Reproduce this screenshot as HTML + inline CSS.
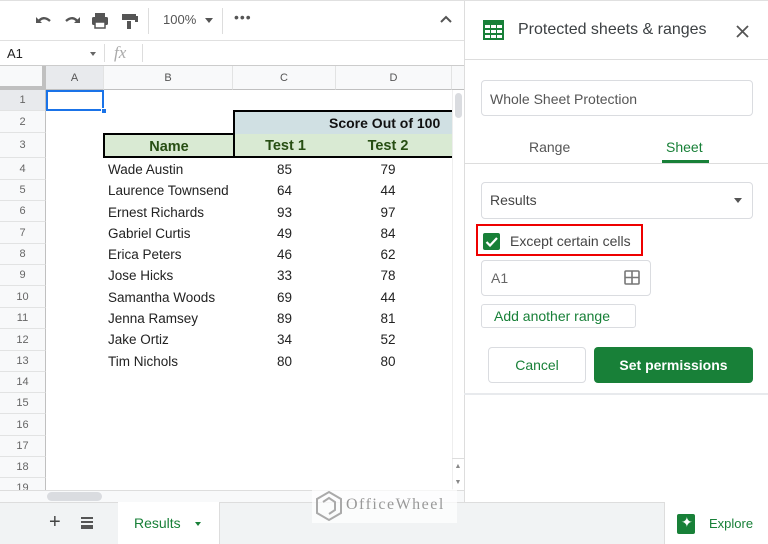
<!DOCTYPE html>
<html><head><style>
*{box-sizing:border-box;margin:0;padding:0}
body{width:768px;height:544px;overflow:hidden;background:#fff;font-family:"Liberation Sans",Arial,sans-serif;position:relative;font-size:13px;color:#222}
.a{position:absolute}
.rh{position:absolute;left:0;width:46px;background:#f8f9fa;border-bottom:1px solid #e2e3e3;border-right:1px solid #c0c0c0;color:#666;font-size:11px;text-align:center}
.ch{position:absolute;top:66px;height:24px;background:#f8f9fa;border-right:1px solid #e2e3e3;border-bottom:1px solid #c0c0c0;color:#555;font-size:11px;text-align:center;line-height:24px}
.num{text-align:center}
.pt{color:#3c4043}
</style></head><body>
<div class="a" style="left:0;top:0;width:464px;height:41px;border-bottom:1px solid #e0e0e0;border-top:1px solid #e0e0e0"></div>
<svg class="a" style="left:34px;top:12px" width="120" height="18" viewBox="0 0 120 18">
<path d="M4 10 Q9 3 16 9" stroke="#555" stroke-width="2.4" fill="none"/><path d="M2 5v6h6" fill="#555"/>
<path d="M44 10 Q39 3 32 9" stroke="#555" stroke-width="2.4" fill="none"/><path d="M46 5v6h-6" fill="#555"/>
<rect x="58" y="5" width="16" height="8" rx="1.5" fill="#555"/><rect x="61" y="1" width="10" height="4" fill="#555"/><rect x="61" y="10" width="10" height="6" fill="#fff" stroke="#555" stroke-width="1.5"/>
<rect x="88" y="2" width="14" height="6" fill="#555"/><rect x="101" y="4" width="3" height="6" fill="#555"/><rect x="93" y="9" width="4" height="8" fill="#555"/>
</svg>
<div class="a" style="left:148px;top:8px;width:1px;height:26px;background:#ddd"></div>
<div class="a" style="left:163px;top:12px;font-size:13px;color:#555">100%</div>
<div class="a" style="left:205px;top:18px;border:4px solid transparent;border-top:5px solid #555"></div>
<div class="a" style="left:222px;top:8px;width:1px;height:26px;background:#ddd"></div>
<div class="a" style="left:234px;top:9px;font-size:14px;color:#555;letter-spacing:1px">•••</div>
<svg class="a" style="left:440px;top:15px" width="12" height="8"><path d="M1 7l5-5 5 5" stroke="#555" stroke-width="2" fill="none"/></svg>
<div class="a" style="left:0;top:41px;width:464px;height:25px;border-bottom:1px solid #ccc"></div>
<div class="a" style="left:7px;top:46px;font-size:13px">A1</div>
<div class="a" style="left:90px;top:52px;border:3px solid transparent;border-top:4px solid #666"></div>
<div class="a" style="left:104px;top:44px;width:1px;height:18px;background:#ddd"></div>
<div class="a" style="left:114px;top:43px;font-family:'Liberation Serif',serif;font-style:italic;font-size:17px;color:#aaa">fx</div>
<div class="a" style="left:142px;top:44px;width:1px;height:18px;background:#ddd"></div>
<div class="a" style="left:0;top:66px;width:46px;height:24px;background:#f8f9fa;border-right:4px solid #c0c0c0;border-bottom:4px solid #c0c0c0"></div>
<div class="ch" style="left:46px;width:58px;background:#e8eaed">A</div>
<div class="ch" style="left:104px;width:129px">B</div>
<div class="ch" style="left:233px;width:103px">C</div>
<div class="ch" style="left:336px;width:116px">D</div>
<div class="ch" style="left:452px;width:12px;border-right:none"></div>
<div class="rh" style="top:90px;height:21px;line-height:21px;background:#e8eaed">1</div>
<div class="rh" style="top:111px;height:22px;line-height:22px">2</div>
<div class="rh" style="top:133px;height:25px;line-height:25px">3</div>
<div class="rh" style="top:158px;height:22px;line-height:22px">4</div>
<div class="rh" style="top:180px;height:21px;line-height:21px">5</div>
<div class="rh" style="top:201px;height:21px;line-height:21px">6</div>
<div class="rh" style="top:222px;height:22px;line-height:22px">7</div>
<div class="rh" style="top:244px;height:21px;line-height:21px">8</div>
<div class="rh" style="top:265px;height:21px;line-height:21px">9</div>
<div class="rh" style="top:286px;height:22px;line-height:22px">10</div>
<div class="rh" style="top:308px;height:21px;line-height:21px">11</div>
<div class="rh" style="top:329px;height:22px;line-height:22px">12</div>
<div class="rh" style="top:351px;height:21px;line-height:21px">13</div>
<div class="rh" style="top:372px;height:21px;line-height:21px">14</div>
<div class="rh" style="top:393px;height:21px;line-height:21px">15</div>
<div class="rh" style="top:414px;height:22px;line-height:22px">16</div>
<div class="rh" style="top:436px;height:21px;line-height:21px">17</div>
<div class="rh" style="top:457px;height:21px;line-height:21px">18</div>
<div class="rh" style="top:478px;height:13px;line-height:21px;overflow:hidden;border-bottom:none">19</div>
<div class="a" style="left:46px;top:90px;width:58px;height:21px;border:2px solid #1a73e8"></div>
<div class="a" style="left:101px;top:108px;width:6px;height:6px;background:#1a73e8;border:1px solid #fff"></div>
<div class="a" style="left:233px;top:110px;width:221px;height:48px;border:2px solid #000;border-right:none;background:#d9ead3"></div>
<div class="a" style="left:235px;top:112px;width:219px;height:22px;background:#d0e0e3"></div>
<div class="a" style="left:329px;top:115px;font-weight:bold;font-size:14px;color:#111">Score Out of 100</div>
<div class="a" style="left:103px;top:133px;width:132px;height:25px;border:2px solid #000;background:#d9ead3;text-align:center;line-height:24px;font-weight:bold;font-size:14.5px;color:#274e13">Name</div>
<div class="a" style="left:235px;top:138px;width:101px;text-align:center;font-weight:bold;font-size:14.5px;color:#274e13">Test 1</div>
<div class="a" style="left:336px;top:138px;width:104px;text-align:center;font-weight:bold;font-size:14.5px;color:#274e13">Test 2</div>
<div class="a" style="left:108px;top:159px;line-height:21.3px;font-size:13.5px">Wade Austin<br>Laurence Townsend<br>Ernest Richards<br>Gabriel Curtis<br>Erica Peters<br>Jose Hicks<br>Samantha Woods<br>Jenna Ramsey<br>Jake Ortiz<br>Tim Nichols</div>
<div class="a num" style="left:233px;width:103px;top:159px;line-height:21.3px;font-size:13.5px">85<br>64<br>93<br>49<br>46<br>33<br>69<br>89<br>34<br>80</div>
<div class="a num" style="left:336px;width:104px;top:159px;line-height:21.3px;font-size:13.5px">79<br>44<br>97<br>84<br>62<br>78<br>44<br>81<br>52<br>80</div>
<div class="a" style="left:452px;top:90px;width:12px;height:400px;background:#fff;border-left:1px solid #eee"></div>
<div class="a" style="left:455px;top:93px;width:7px;height:25px;border-radius:4px;background:#dadce0"></div>
<div class="a" style="left:452px;top:458px;width:12px;height:32px;border-top:1px solid #ddd;font-size:7px;color:#888;text-align:center;line-height:16px">▲<br>▼</div>
<div class="a" style="left:0;top:490px;width:464px;height:12px;background:#f8f9fa;border-top:1px solid #ddd"></div>
<div class="a" style="left:47px;top:492px;width:55px;height:9px;border-radius:5px;background:#dadce0"></div>
<div class="a" style="left:0;top:502px;width:768px;height:42px;background:#f1f3f4;border-top:1px solid #ddd"></div>
<div class="a" style="left:49px;top:511px;font-size:20px;color:#444">+</div>
<div class="a" style="left:81px;top:517px;width:12px;height:12px;border-top:2px solid #555;border-bottom:2px solid #555"><div style="margin-top:2px;height:2px;background:#555"></div><div style="margin-top:2px;height:2px;background:#555"></div></div>
<div class="a" style="left:118px;top:502px;width:102px;height:42px;background:#fff;border-right:1px solid #ddd"></div>
<div class="a" style="left:134px;top:515px;font-size:14px;color:#188038">Results</div>
<div class="a" style="left:195px;top:522px;border:3.5px solid transparent;border-top:4px solid #188038"></div>
<div class="a" style="left:312px;top:489px;width:145px;height:34px;background:rgba(255,255,255,.7)"></div>
<svg class="a" style="left:314px;top:490px" width="30" height="32"><path d="M15 2l12 7v14l-12 7-12-7V9z" fill="none" stroke="#aaa" stroke-width="2"/><path d="M9 12l6-4 6 4v8l-6 4" fill="none" stroke="#aaa" stroke-width="2"/></svg>
<div class="a" style="left:346px;top:496px;font-family:'Liberation Serif',serif;font-size:16px;color:#999;letter-spacing:1.5px">OfficeWheel</div>
<div class="a" style="left:664px;top:502px;width:104px;height:42px;background:#fff;border-left:1px solid #ddd"></div>
<div class="a" style="left:677px;top:514px;width:18px;height:20px;background:#188038;border-radius:2px"></div>
<div class="a" style="left:681px;top:514px;color:#fff;font-size:14px">✦</div>
<div class="a" style="left:709px;top:516px;font-size:13px;color:#188038">Explore</div>
<div class="a" style="left:464px;top:0;width:304px;height:502px;background:#fff;border-left:1px solid #ddd"></div>
<div class="a" style="left:464px;top:0;width:304px;height:1px;background:#e0e0e0"></div>
<svg class="a" style="left:483px;top:20px" width="21" height="20"><rect x="0" y="0" width="21" height="20" fill="#188038"/><g fill="#fff"><rect x="2" y="5" width="5" height="3"/><rect x="8" y="5" width="5" height="3"/><rect x="14" y="5" width="5" height="3"/><rect x="2" y="10" width="5" height="3"/><rect x="8" y="10" width="5" height="3"/><rect x="14" y="10" width="5" height="3"/><rect x="2" y="15" width="5" height="3"/><rect x="8" y="15" width="5" height="3"/><rect x="14" y="15" width="5" height="3"/></g></svg>
<div class="a pt" style="left:518px;top:21px;font-size:16px">Protected sheets &amp; ranges</div>
<svg class="a" style="left:736px;top:25px" width="13" height="13"><path d="M1 1l11 11M12 1L1 12" stroke="#555" stroke-width="1.8"/></svg>
<div class="a" style="left:464px;top:59px;width:304px;height:1px;background:#ddd"></div>
<div class="a" style="left:481px;top:80px;width:272px;height:36px;border:1px solid #dadce0;border-radius:4px"></div>
<div class="a" style="left:490px;top:91px;font-size:14px;color:#555">Whole Sheet Protection</div>
<div class="a" style="left:529px;top:139px;font-size:14px;color:#555">Range</div>
<div class="a" style="left:666px;top:139px;font-size:14px;color:#188038">Sheet</div>
<div class="a" style="left:662px;top:160px;width:47px;height:3px;background:#188038"></div>
<div class="a" style="left:464px;top:163px;width:304px;height:1px;background:#ddd"></div>
<div class="a" style="left:481px;top:182px;width:272px;height:37px;border:1px solid #dadce0;border-radius:4px"></div>
<div class="a" style="left:490px;top:192px;font-size:14px;color:#444">Results</div>
<div class="a" style="left:734px;top:198px;border:4px solid transparent;border-top:5px solid #555"></div>
<div class="a" style="left:476px;top:224px;width:167px;height:32px;border:2px solid #e00"></div>
<div class="a" style="left:483px;top:233px;width:17px;height:17px;background:#188038;border-radius:2px"></div>
<svg class="a" style="left:483px;top:233px" width="17" height="17"><path d="M3.5 9l3.5 3.5 7-7.5" stroke="#fff" stroke-width="2.2" fill="none"/></svg>
<div class="a" style="left:510px;top:233px;font-size:14px;color:#444">Except certain cells</div>
<div class="a" style="left:481px;top:260px;width:170px;height:36px;border:1px solid #dadce0;border-radius:4px"></div>
<div class="a" style="left:491px;top:270px;font-size:14px;color:#666">A1</div>
<svg class="a" style="left:624px;top:270px" width="16" height="15"><rect x="1" y="1" width="14" height="13" rx="1" fill="none" stroke="#777" stroke-width="1.6"/><path d="M8 1v13M1 7.5h14" stroke="#777" stroke-width="1.6"/></svg>
<div class="a" style="left:481px;top:304px;width:155px;height:24px;border:1px solid #dadce0;border-radius:3px"></div>
<div class="a" style="left:494px;top:308px;font-size:14px;color:#188038">Add another range</div>
<div class="a" style="left:488px;top:347px;width:98px;height:36px;border:1px solid #dadce0;border-radius:4px;text-align:center;line-height:34px;font-size:14px;color:#188038">Cancel</div>
<div class="a" style="left:594px;top:347px;width:159px;height:36px;background:#188038;border-radius:4px;text-align:center;line-height:36px;font-size:14px;font-weight:bold;color:#fff">Set permissions</div>
<div class="a" style="left:464px;top:393px;width:304px;height:2px;background:#e8eaed"></div>
</body></html>
